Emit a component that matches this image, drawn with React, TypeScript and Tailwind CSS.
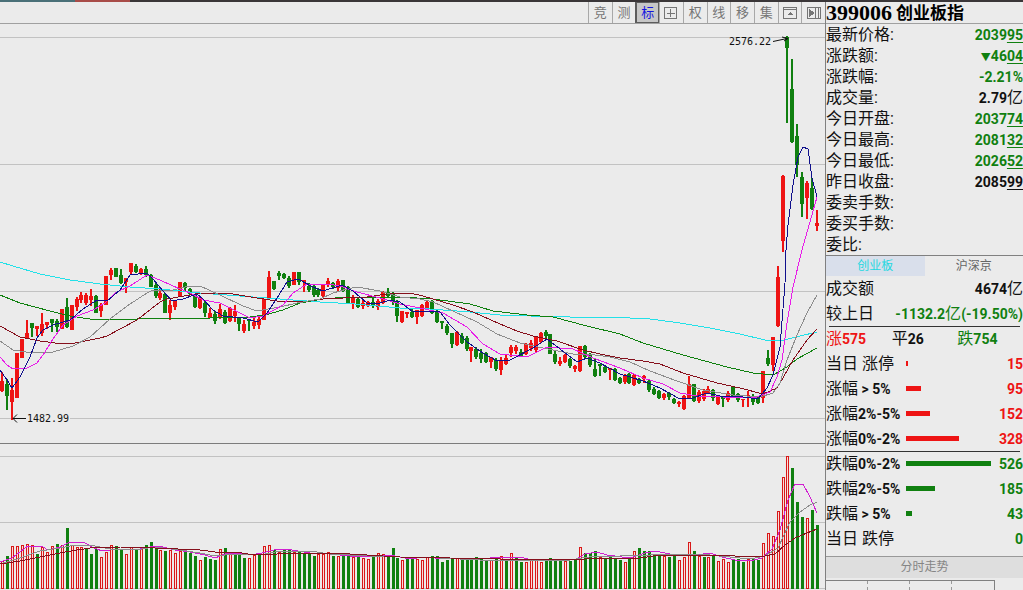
import { useState } from 'react'
import clsx from 'clsx'

const RED = '#ee1414'
const GREEN = '#108010'

const CHART_START = 2.48
const BAR_STEP = 4.937

// [up, high, low, body top, body bottom], all in chart units
type Candle = [number, number, number, number, number]

const candles: Candle[] = [
  [1, 372, 392, 381, 391], [0, 379, 410, 384, 396], [1, 378, 420, 390, 402], [1, 353, 398, 353, 398],
  [1, 339, 358, 339, 358], [1, 320, 338, 333, 338], [0, 323, 337, 323, 328], [1, 326, 336, 326, 329],
  [1, 313, 336, 324, 333], [1, 322, 329, 322, 325], [0, 319, 332, 319, 323], [0, 319, 332, 321, 327],
  [1, 309, 329, 309, 329], [0, 298, 328, 307, 327], [1, 305, 330, 305, 330], [1, 297, 311, 299, 307],
  [1, 292, 303, 295, 300], [1, 293, 305, 295, 303], [1, 289, 306, 296, 300], [0, 295, 313, 296, 313],
  [1, 303, 317, 305, 311], [1, 276, 305, 276, 305], [1, 268, 280, 270, 275], [0, 268, 277, 268, 277],
  [0, 269, 284, 275, 283], [1, 278, 293, 278, 282], [1, 263, 274, 263, 272], [0, 264, 273, 266, 272],
  [1, 268, 275, 269, 274], [0, 266, 277, 269, 275], [0, 274, 287, 275, 287], [0, 283, 298, 285, 296],
  [1, 289, 300, 293, 298], [0, 293, 313, 294, 313], [1, 300, 320, 305, 313], [1, 300, 310, 301, 307],
  [1, 282, 297, 282, 297], [0, 282, 291, 283, 288], [0, 288, 295, 289, 294], [0, 294, 308, 295, 307],
  [1, 297, 309, 298, 308], [0, 300, 317, 303, 313], [1, 308, 318, 313, 318], [0, 311, 324, 314, 321],
  [1, 304, 319, 309, 318], [0, 310, 324, 312, 323], [1, 307, 322, 308, 321], [1, 305, 322, 311, 316],
  [0, 317, 331, 317, 324], [1, 320, 333, 324, 331], [0, 319, 331, 319, 321], [1, 318, 329, 322, 326],
  [1, 315, 329, 319, 325], [1, 299, 320, 299, 320], [1, 271, 298, 277, 298], [0, 281, 290, 281, 289],
  [0, 271, 280, 273, 276], [0, 273, 279, 274, 278], [0, 276, 288, 278, 286], [1, 272, 285, 272, 285],
  [0, 272, 285, 272, 282], [1, 280, 292, 280, 282], [0, 283, 292, 286, 290], [0, 285, 297, 286, 295],
  [0, 288, 297, 290, 295], [1, 284, 297, 285, 296], [1, 278, 287, 281, 285], [0, 282, 289, 283, 287],
  [1, 279, 291, 281, 288], [0, 280, 292, 280, 291], [0, 286, 304, 287, 303], [1, 295, 309, 297, 303],
  [0, 298, 308, 299, 307], [1, 299, 309, 303, 306], [1, 301, 307, 302, 306], [0, 297, 308, 302, 306],
  [1, 299, 310, 301, 307], [1, 291, 304, 292, 303], [0, 288, 298, 292, 296], [0, 292, 305, 294, 302],
  [0, 300, 322, 302, 316], [1, 311, 323, 311, 322], [1, 312, 318, 312, 314], [0, 309, 318, 312, 317],
  [1, 310, 324, 310, 317], [1, 304, 317, 305, 316], [1, 300, 309, 302, 308], [0, 300, 314, 301, 313],
  [0, 310, 323, 311, 322], [0, 321, 329, 321, 323], [0, 324, 335, 326, 333], [0, 333, 348, 333, 344],
  [1, 331, 346, 332, 345], [0, 333, 344, 336, 343], [0, 336, 351, 338, 349], [1, 347, 362, 347, 351],
  [0, 347, 359, 349, 357], [0, 349, 363, 353, 359], [0, 352, 363, 353, 362], [1, 357, 368, 357, 362],
  [0, 358, 371, 360, 369], [1, 357, 375, 361, 370], [1, 354, 365, 358, 364], [1, 345, 357, 347, 353],
  [1, 345, 354, 347, 351], [0, 349, 357, 352, 356], [1, 343, 355, 344, 354], [1, 340, 351, 343, 348],
  [1, 336, 352, 336, 350], [1, 332, 343, 333, 342], [0, 330, 339, 332, 336], [0, 334, 354, 334, 354],
  [0, 350, 364, 354, 362], [1, 357, 366, 361, 364], [1, 354, 363, 355, 362], [0, 358, 368, 359, 366],
  [1, 365, 372, 366, 369], [1, 346, 372, 346, 371], [0, 345, 359, 346, 357], [0, 353, 367, 355, 365],
  [0, 358, 377, 369, 376], [0, 364, 376, 364, 366], [0, 366, 373, 367, 372], [1, 368, 380, 368, 370],
  [0, 368, 381, 369, 380], [0, 377, 384, 378, 383], [1, 374, 384, 375, 382], [0, 373, 384, 374, 383],
  [1, 374, 386, 375, 385], [0, 378, 384, 379, 383], [1, 375, 383, 376, 379], [0, 380, 392, 381, 390],
  [0, 387, 395, 389, 394], [0, 390, 399, 391, 398], [1, 393, 400, 394, 398], [0, 392, 400, 393, 397],
  [0, 398, 404, 399, 403], [1, 401, 407, 402, 404], [1, 395, 410, 396, 409], [1, 376, 398, 384, 398],
  [0, 384, 402, 384, 401], [1, 390, 403, 392, 401], [1, 389, 401, 391, 399], [1, 386, 393, 389, 393],
  [0, 389, 401, 390, 398], [1, 395, 405, 397, 404], [0, 396, 407, 397, 399], [1, 391, 402, 393, 400],
  [0, 386, 397, 387, 396], [0, 393, 402, 394, 400], [1, 399, 407, 399, 400], [1, 391, 407, 395, 396],
  [0, 394, 405, 396, 402], [0, 397, 404, 398, 403], [1, 371, 403, 371, 398], [0, 350, 366, 358, 364],
  [1, 337, 371, 337, 365], [1, 266, 327, 277, 326], [1, 175, 252, 176, 241], [0, 36, 123, 37, 48],
  [0, 59, 143, 89, 142], [0, 124, 177, 136, 165], [0, 172, 217, 177, 204], [1, 181, 219, 183, 198],
  [0, 178, 210, 188, 209], [1, 210, 231, 223, 226],
]

// Positive = up day (hollow red), negative = down day (solid green). Value is the bar height.
const volumes = [
  28, -33, 43, 43, 44, 45, 44, -35, 42, 37, 43, -45, 44, -61, 44, 42, 42, -40, -35, -40, 32, 37, 44, -43, -39,
  35, 42, -40, 41, -44, -47, -42, 39, -38, 39, 36, 38, -39, -36, -33, 29, -32, -30, -29, 40, -41, 37, -35, -34,
  -31, 31, 34, -36, 43, 44, -39, 37, -39, -40, 37, -37, -35, -35, -33, 35, 35, 37, -33, 33, -35, -33, 32, -32,
  31, 30, -32, 36, 35, -32, -41, -31, 29, -30, -30, 30, 29, 32, -33, -33, -27, -29, -30, 31, -30, -31, -29, -32,
  -30, -29, 29, -30, 33, -30, 36, -32, -27, 27, 29, 29, 27, -28, -31, -29, -28, 28, -28, -30, 42, -36, -36, -38,
  32, -31, -32, -31, -29, 27, -31, 38, -41, -38, -38, -33, -35, 33, -32, -33, 29, 32, 47, -38, 33, -32, 32, -33,
  28, 30, 27, -30, -30, -27, 30, -31, -29, 46, 56, 53, 78, 112, 133, -121, -87, -72, 71, -79, -64,
]

const priceLines = [
  {
    color: '#22e0e8',
    points:
      '0,262 13,266 40,274 70,280 100,284 130,287 160,289 200,293 240,296 280,299 320,302 355,304 400,308 430,309 470,312 500,315 530,316 570,317 610,317 650,319 680,323 710,328 740,334 765,340 780,341 800,336 817,332',
  },
  {
    color: '#0f800f',
    points:
      '0,295 20,303 50,311 70,316 90,319 115,320 137,319 160,318 210,318 250,317 265,315 283,310 300,303 323,299 347,297 380,297 400,297 433,299 470,304 493,311 527,315 553,317 587,326 620,334 643,343 683,355 727,367 753,373 773,375 787,367 797,359 817,348',
  },
  {
    color: '#85101c',
    points:
      '0,326 20,337 40,341 55,343 75,343 100,338 107,336 137,320 160,302 167,299 190,295 200,293 233,294 257,298 277,301 300,302 323,299 343,298 367,297 387,294 410,293 423,296 453,305 473,312 500,324 517,331 533,336 557,341 583,350 600,354 620,358 643,361 660,364 683,373 717,383 740,388 763,394 777,388 783,378 793,360 807,340 817,329',
  },
  {
    color: '#8c8c8c',
    points:
      '0,341 13,350 33,353 53,352 73,346 90,337 110,319 127,306 147,293 153,290 173,290 185,287 200,286 220,295 243,306 257,311 280,307 297,303 320,299 333,293 347,289 357,287 380,291 400,297 420,299 433,302 453,311 477,322 497,334 520,343 543,348 573,354 595,355 610,357 630,362 650,371 677,381 703,390 733,395 760,397 773,393 780,383 787,360 797,335 807,313 817,295',
  },
  {
    color: '#e81ce8',
    points:
      '0,357 7,365 13,369 27,368 37,363 43,355 53,339 63,325 77,316 93,310 105,303 115,293 130,286 147,275 160,280 173,286 190,293 203,300 220,303 240,313 250,318 263,316 283,305 293,293 307,284 327,284 340,286 357,292 380,298 400,304 420,308 443,313 467,327 483,344 500,354 527,357 547,347 573,349 593,358 620,368 643,378 663,384 680,393 697,396 723,397 757,397 770,392 777,377 782,360 787,323 793,287 802,250 817,197',
  },
  {
    color: '#10108c',
    points:
      '0,370 7,380 12,388 20,377 30,357 37,338 43,330 53,325 70,320 83,309 97,300 107,301 120,290 130,275 147,273 153,279 163,291 172,301 183,299 197,294 203,299 213,310 223,316 243,318 258,322 267,313 277,298 287,282 298,279 313,287 323,291 342,285 353,291 367,303 380,303 390,300 400,302 413,312 427,311 440,312 450,325 467,342 483,353 497,361 510,360 533,348 547,339 560,349 577,362 587,358 600,363 620,374 643,381 660,388 680,399 693,398 707,393 720,396 743,397 758,399 767,388 773,375 780,347 785,283 786,250 788,225 793,185 798,157 803,147 808,149 812,178 817,197',
  },
]

const volumeLines = [
  {
    color: '#d020d0',
    points:
      '0,562 12,558 28,546 43,547 48,550 60,547 70,542 85,543 92,547 102,551 110,550 140,549 155,546 163,547 175,550 190,552 205,555 215,558 225,554 235,553 250,555 262,553 278,549 292,550 310,553 330,554 350,556 370,557 390,555 410,559 425,557 445,559 470,558 490,558 520,557 535,561 555,559 575,560 585,554 597,552 607,555 630,558 645,553 655,551 670,554 690,556 710,553 722,557 735,560 750,561 762,558 772,549 780,530 788,500 795,484 803,484 810,497 817,513',
  },
  {
    color: '#8c8c8c',
    points:
      '0,564 20,558 40,551 60,548 75,545 95,546 110,549 135,550 155,547 180,550 200,553 215,556 235,554 260,555 280,551 310,551 330,554 370,556 400,557 440,558 480,560 530,560 570,560 595,556 620,556 650,555 700,554 730,557 750,559 765,556 778,548 790,522 800,512 810,505 817,502',
  },
  {
    color: '#85101c',
    points:
      '0,564 20,561 40,557 65,552 90,548 120,547 155,548 200,550 215,552 235,552 255,555 300,553 350,554 400,557 450,558 500,559 570,560 600,558 640,558 660,555 710,555 760,557 775,554 785,545 795,538 807,533 817,529',
  },
]

const barX = (i: number) => Math.round(CHART_START + i * BAR_STEP)

function KLineChart() {
  return (
    <svg viewBox="0 24 825 566" className="block h-auto w-full" role="img" aria-label="创业板指 K线图">
      <g fill="#c2c2c2" shapeRendering="crispEdges">
        {[37, 164, 291, 418, 456, 522].map((y) => (
          <rect key={y} x="0" y={y} width="825" height="1" />
        ))}
        <rect x="0" y="588" width="825" height="1" />
        <rect x="0" y="443" width="825" height="1" fill="#7c7c7c" />
      </g>

      <g shapeRendering="crispEdges">
        {candles.map(([up, high, low, top, bottom], i) => (
          <g key={i} fill={up ? RED : GREEN}>
            <rect x={barX(i) - 1} y={high} width="2" height={low - high} />
            <rect x={barX(i) - 2} y={top} width="4" height={bottom - top} />
          </g>
        ))}
        {volumes.map((v, i) =>
          v > 0 ? (
            <g key={i}>
              <rect x={barX(i) - 1} y={589 - v} width="3" height={v} fill="#d81818" />
              <rect x={barX(i)} y={590 - v} width="1" height={v - 2} fill="#fbdcd8" />
            </g>
          ) : (
            <rect key={i} x={barX(i) - 1} y={589 + v} width="3" height={-v} fill={GREEN} />
          ),
        )}
      </g>

      <g fill="none" strokeWidth="1" strokeLinejoin="round" shapeRendering="crispEdges">
        {[...priceLines, ...volumeLines].map((line, i) => (
          <polyline key={i} points={line.points} stroke={line.color} />
        ))}
      </g>

      {/* high / low markers */}
      <rect x="26" y="413" width="44" height="10" fill="#ebebeb" />
      <g stroke="#111" fill="none">
        <path d="M13 418.5H26M17 414.5L13 418.5L17 422.5" />
        <path d="M773 41.5L787 38.5M782 37L788 38.5L784 41" />
      </g>
      <g fill="#111" className="font-['DejaVu_Sans_Mono',monospace] text-[10px]">
        <text x="729" y="45">2576.22</text>
        <text x="27" y="422">1482.99</text>
      </g>
    </svg>
  )
}

const tools = ['竞', '测', '标', 'add', '权', '线', '移', '集', 'window', 'next']

function ToolIcon({ name }: { name: string }) {
  return (
    <svg viewBox="0 0 14 14" className="size-3.5" fill="none" stroke="#757575" shapeRendering="crispEdges">
      {name === 'add' && <path d="M.5 1.5H12.5V12.5H.5ZM6.5 3V11M2.5 7H10.5" />}
      {name === 'window' && (
        <>
          <path d="M.5 1.5H13.5V12.5H.5ZM.5 3.5H13.5" />
          <path d="M4 9L7 6L10 9Z" fill="#757575" stroke="none" />
        </>
      )}
      {name === 'next' && (
        <>
          <path d="M.5 1.5H13.5V12.5H.5ZM8.5 1.5V12.5M11.5 1.5V12.5" />
          <path d="M2 3V11L8 7Z" fill="#757575" stroke="none" />
        </>
      )}
    </svg>
  )
}

function Toolbar() {
  const [active, setActive] = useState('标')

  return (
    <div className="flex h-[22px] justify-end border-b border-[#a0a0a0]">
      <div className="grid w-[237px] grid-cols-10">
        {tools.map((tool) => (
          <button
            key={tool}
            type="button"
            aria-label={tool}
            onClick={() => setActive(tool)}
            className={clsx(
              'flex items-center justify-center text-[13px] leading-none',
              active === tool
                ? 'border border-l-2 border-[#5c5c5c] bg-[#c6c6c6] text-[#1414e0]'
                : 'border-l border-[#a8a8a8] text-[#757575]',
            )}
          >
            {tool.length > 1 ? <ToolIcon name={tool} /> : tool}
          </button>
        ))}
      </div>
    </div>
  )
}

// tail: last two digits, drawn underlined
const quotes = [
  { label: '最新价格', value: '2039', tail: '95', tone: 'text-[#108010]' },
  { label: '涨跌额', arrow: '▼', value: '46', tail: '04', tone: 'text-[#108010]' },
  { label: '涨跌幅', value: '-2.21%', tone: 'text-[#108010]' },
  { label: '成交量', value: '2.79', unit: '亿', tone: 'text-[#111]' },
  { label: '今日开盘', value: '2037', tail: '74', tone: 'text-[#108010]' },
  { label: '今日最高', value: '2081', tail: '32', tone: 'text-[#108010]' },
  { label: '今日最低', value: '2026', tail: '52', tone: 'text-[#108010]' },
  { label: '昨日收盘', value: '2085', tail: '99', tone: 'text-[#111]' },
  { label: '委卖手数' },
  { label: '委买手数' },
  { label: '委比' },
]

function QuoteTable() {
  return (
    <table className="w-full border-collapse">
      <tbody>
        {quotes.map((q) => (
          <tr key={q.label} className="h-[21px]">
            <th className="p-0 pt-px text-left font-normal">{q.label}:</th>
            <td className={clsx('p-0 pt-px text-right text-sm leading-5 font-bold', q.tone)}>
              {q.arrow && <span className="text-[10px] leading-none">{q.arrow}</span>}
              {q.value}
              {q.tail && <span className="underline underline-offset-2">{q.tail}</span>}
              {q.unit && <span className="text-base leading-none font-normal">{q.unit}</span>}
            </td>
          </tr>
        ))}
      </tbody>
    </table>
  )
}

type Breadth = { name: string; range?: string; count: number }

const rising: Breadth[] = [
  { name: '当日 涨停', count: 15 },
  { name: '涨幅', range: ' > 5%', count: 95 },
  { name: '涨幅', range: '2%-5%', count: 152 },
  { name: '涨幅', range: '0%-2%', count: 328 },
]

const falling: Breadth[] = [
  { name: '跌幅', range: '0%-2%', count: 526 },
  { name: '跌幅', range: '2%-5%', count: 185 },
  { name: '跌幅', range: ' > 5%', count: 43 },
  { name: '当日 跌停', count: 0 },
]

function BreadthTable({ rows, up }: { rows: Breadth[]; up?: boolean }) {
  return (
    <table className="w-full table-fixed border-collapse">
      <tbody>
        {rows.map((row) => (
          <tr key={row.name + row.range} className="h-[25px]">
            <th className="w-20 p-0 pt-px text-left font-normal whitespace-pre">
              {row.name}
              <b className="text-sm leading-none font-bold">{row.range}</b>
            </th>
            <td className="p-0">
              <div
                className={clsx('h-[5px]', up ? 'bg-[#ee1414]' : 'bg-[#108010]')}
                style={{ width: Math.floor(row.count * 0.162) }}
              />
            </td>
            <td className={clsx('w-7 p-0 text-right text-sm font-bold', up ? 'text-[#ee1414]' : 'text-[#108010]')}>
              {row.count}
            </td>
          </tr>
        ))}
      </tbody>
    </table>
  )
}

function Divider() {
  return <hr className="mx-[3px] -mb-px border-[#333]" />
}

function QuotePanel() {
  const [tab, setTab] = useState('创业板')

  return (
    <aside className="w-[198px] shrink-0 border-l border-[#808080] text-base leading-5">
      <h1 className="flex h-[22px] items-center gap-1 border-b border-[#a0a0a0] text-[17px] leading-5 font-bold whitespace-nowrap text-black">
        <span className="font-['Liberation_Serif',serif] text-[22px] leading-5">399006</span>
        创业板指
      </h1>

      <QuoteTable />

      <div className="grid h-[21px] grid-cols-2 border-t border-[#808080] text-xs">
        {['创业板', '沪深京'].map((name) => (
          <button
            key={name}
            type="button"
            onClick={() => setTab(name)}
            className={clsx(tab === name ? 'bg-[#d9dfeb] text-[#22d8e0]' : 'text-[#666]')}
          >
            {name}
          </button>
        ))}
      </div>

      <table className="w-full border-collapse">
        <tbody>
          <tr className="h-[25px]">
            <th className="p-0 text-left font-normal">成交额</th>
            <td className="p-0 text-right text-sm font-bold">
              4674<span className="text-base leading-none font-normal">亿</span>
            </td>
          </tr>
          <tr className="h-[25px]">
            <th className="p-0 text-left font-normal">较上日</th>
            <td className="p-0 text-right text-sm font-bold whitespace-nowrap text-[#108010]">
              -1132.2<span className="text-base leading-none font-normal">亿</span>(-19.50%)
            </td>
          </tr>
        </tbody>
      </table>

      <Divider />
      <div className="grid h-[25px] grid-cols-3 items-center">
        <div className="text-[#ee1414]">涨<b className="text-sm">575</b></div>
        <div>平<b className="text-sm">26</b></div>
        <div className="text-[#108010]">跌<b className="text-sm">754</b></div>
      </div>

      <BreadthTable rows={rising} up />
      <Divider />
      <BreadthTable rows={falling} />

      <h2 className="mt-[5px] h-[22px] border-t border-[#999] bg-[#dedede] text-center text-xs leading-5 text-[#858585]">
        分时走势
      </h2>
      {/* top edge of the intraday grid */}
      <div className="mt-0.5 mr-7 grid h-2.5 grid-cols-4 divide-x divide-dashed divide-[#999] border-t border-r border-[#808080]">
        <span />
        <span />
        <span />
        <span />
      </div>
    </aside>
  )
}

export default function App() {
  return (
    <div className="bg-[#ebebeb] font-[Roboto,'Noto_Sans_CJK_SC',sans-serif] text-[#111]">
      <div className="flex h-0.5 bg-[#3a3638]">
        <span className="w-[75px] bg-[#4a7078]" />
        <span className="w-[55px] bg-[#a84c48]" />
      </div>
      <div className="flex">
        <main className="min-w-0 flex-1">
          <Toolbar />
          <KLineChart />
        </main>
        <QuotePanel />
      </div>
    </div>
  )
}
